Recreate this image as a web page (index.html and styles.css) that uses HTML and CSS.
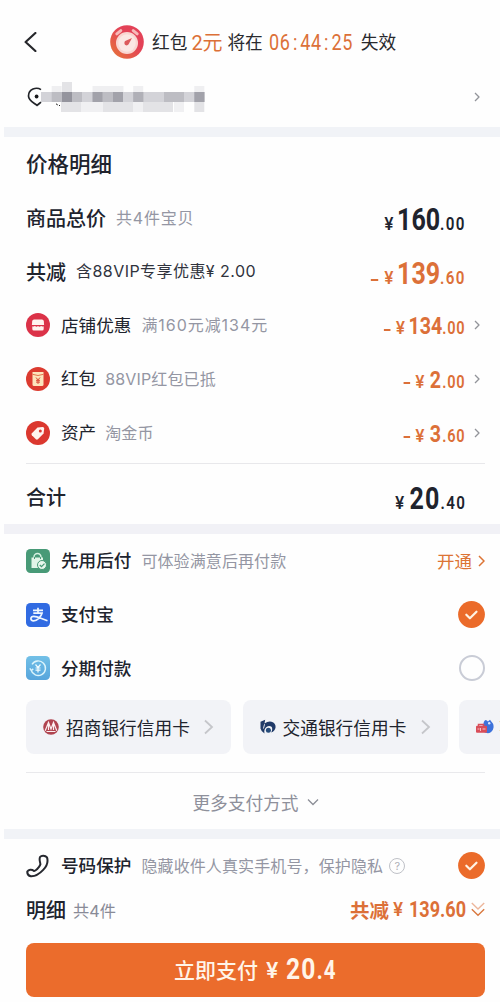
FILE: index.html
```html
<!DOCTYPE html>
<html lang="zh-CN">
<head>
<meta charset="utf-8">
<title>支付</title>
<link rel="stylesheet" href="styles.css">
</head>
<body>
<svg width="0" height="0" class="defs">
  <defs>
    <symbol id="next" viewBox="0 0 6 10"><path d="M1 1l4 4-4 4" fill="none" stroke="currentColor" stroke-width="1.3" stroke-linejoin="round"/></symbol>
    <symbol id="checked" viewBox="0 0 27 27"><circle cx="13.5" cy="13.5" r="13.4" fill="#eb6b2a"/><path d="M8.300 13.700l3.600 3.600 6.600-6.600" fill="none" stroke="#fff3e4" stroke-width="2.200" stroke-linecap="round" stroke-linejoin="round"/></symbol>
  </defs>
</svg>
<header class="top">
  <svg class="back" width="13" height="20" viewBox="0 0 13 20"><path d="M11.4 1L1.6 10l9.8 9" fill="none" stroke="#26272b" stroke-width="2.2" stroke-linecap="round" stroke-linejoin="round"/></svg>
  <svg class="clock" width="34" height="34" viewBox="0 0 34 34">
    <defs><linearGradient id="cg" x1="1" y1="0" x2="0" y2="1"><stop offset=".4" stop-color="#e34257"/><stop offset="1" stop-color="#e77838"/></linearGradient></defs>
    <circle cx="17" cy="17" r="16.8" fill="url(#cg)"/>
    <path d="M6.800 8.800l4-3.200M27.200 8.800l-4-3.200" stroke="#f7b9b8" stroke-width="3" stroke-linecap="round"/>
    <circle cx="17" cy="18" r="11" fill="#f9d6d1"/><circle cx="17" cy="18" r="8.700" fill="#fbe7e3"/>
    <path d="M16 20.3a2.5 2.5 0 0 1-.8-4.2l6.800-3.200-3.400 6.400a2.500 2.500 0 0 1-2.600 1z" fill="#dc5a5b"/>
  </svg>
  <div class="notice"><span>红包</span><span class="hot amount">2元</span><span>将在</span><span class="hot timer"><span class="narrow">06<i>:</i>44<i>:</i>25</span></span><span>失效</span></div>
</header>
<div class="address">
  <svg width="178" height="30" viewBox="0 0 178 30">
    <path d="M14 7.600C9.300 4.600 1.500 7 1.500 14c0 4.600 4.600 6.400 8.500 9.400 1.500-1.300 2.800-2.300 4-3.300" fill="none" stroke="#222429" stroke-width="1.700"/>
    <circle cx="9.600" cy="14.500" r="1.900" fill="#17181b"/>
    <path d="M29 21.800l1.800 1.200M32 23l1 1" stroke="#222" stroke-width="1"/>
    <path fill="#efeff1" d="M24.700 4h10v6h-10zM65.500 4h31v6h-31zM106.200 4h10v6h-10zM167.300 4h10v6h-10z"/>
    <path fill="#e3e3e6" d="M35 0h10v10H35zM34 20h20v10H34zM76 20h30v10H76zM116 20h30v10h-30zM167.300 20h10v10h-10z"/>
    <path fill="#f0f0f2" d="M54 20h22v10H54zM106 20h10v10h-10zM147 20h10v10h-10z"/>
    <path fill="#d3d3d8" d="M14 10h163.500v10H14z"/>
    <path fill="#bdbdc3" d="M24.700 10h10.300v10H24.700zM45 10h10v10H45zM76 10h10v10H76zM137 10h20v10h-20z"/>
    <path fill="#94949d" d="M35 10h10v10H35z"/>
    <path fill="#a2a2aa" d="M65.500 10h10.200v10H65.500zM86 10h10v10H86zM167.300 10h10.200v10h-10.200z"/>
    <path fill="#b0b0b7" d="M106.200 10h10.200v10h-10.200z"/>
  </svg>
  <svg class="next" width="6" height="10"><use href="#next"/></svg>
</div>
<div class="band"></div>

<section class="prices">
  <h2>价格明细</h2>
  <div class="row"><b class="label">商品总价</b><span class="hint h1">共4件宝贝</span><div class="price big"><i>¥</i>160<small>.00</small></div></div>
  <div class="row"><b class="label">共减</b><span class="hint dark h2">含88VIP专享优惠¥ 2.00</span><div class="price big hot"><em></em><i>¥</i>139<small>.60</small></div></div>
  <div class="row item">
    <svg width="24" height="24" viewBox="0 0 24 24"><circle cx="12" cy="12" r="12" fill="#db3248"/><path d="M8 6.500h8q1.500 0 1.800 1.500l.3 4h-12.200l.3-4Q6.500 6.500 8 6.500z" fill="#fff3ef"/><path d="M6.300 13.300q1.400.6 2.700-.2 1.500 1.200 3 0 1.500 1.200 3 0 1.300.8 2.700.2V16q0 1.500-1.500 1.500H7.800q-1.500 0-1.500-1.500z" fill="#fff3ef"/></svg>
    <span class="label">店铺优惠</span><span class="hint h3">满160元减134元</span><div class="price hot"><em></em><i>¥</i>134<small>.00</small></div><svg class="next" width="6" height="10"><use href="#next"/></svg></div>
  <div class="row item">
    <svg width="24" height="24" viewBox="0 0 24 24"><circle cx="12" cy="12" r="12" fill="#dc3b30"/><path d="M6.500 5h11v12.500q0 1.500-1.500 1.500H8q-1.500 0-1.500-1.500z" fill="#fce5bd"/><path d="M6.500 7.300q5.500 2.400 11 0" fill="none" stroke="#e0653f" stroke-width=".9"/><path d="M10 10.500l2 2.400 2-2.400M12 12.900v4M10 13.300h4M10 15.100h4" fill="none" stroke="#d94b36" stroke-width="1"/></svg>
    <span class="label">红包</span><span class="hint h4">88VIP红包已抵</span><div class="price hot"><em></em><i>¥</i><span class="wide">2</span><small>.00</small></div><svg class="next" width="6" height="10"><use href="#next"/></svg></div>
  <div class="row item">
    <svg width="24" height="24" viewBox="0 0 24 24"><circle cx="12" cy="12" r="12" fill="#db382f"/><path d="M11.500 6.500l5.200-.6q1.600 0 1.500 1.500l-.6 5.200-5.700 5.700q-1 .9-2 0l-4-4.100q-.9-1 0-2z" fill="#fff4ef"/><circle cx="14.300" cy="10" r="1.500" fill="#db382f"/></svg>
    <span class="label">资产</span><span class="hint h5">淘金币</span><div class="price hot"><em></em><i>¥</i><span class="wide">3</span><small>.60</small></div><svg class="next" width="6" height="10"><use href="#next"/></svg></div>
  <div class="row total"><b class="label">合计</b><div class="price big"><i>¥</i><span class="wide">20</span><small>.40</small></div></div>
</section>
<div class="band violet"></div>

<section class="methods">
  <div class="row item">
    <svg width="24" height="24" viewBox="0 0 24 24"><rect width="24" height="24" rx="4.500" fill="#489a77"/><path d="M8 9V8a3.500 3.500 0 0 1 7 0v1" fill="none" stroke="#d7f2e2" stroke-width="1.400"/><path d="M5.500 8.500h11.500v10.500H5.500z" fill="#e2f5e8"/><path d="M8.500 8v2M14.500 8v2" stroke="#489a77"/><circle cx="16" cy="16" r="4.500" fill="#e8f7ed" stroke="#489a77"/><path d="M13.800 16l1.700 1.600 3-3" fill="none" stroke="#489a77" stroke-width="1.300"/></svg>
    <b class="label">先用后付</b><span class="hint h6">可体验满意后再付款</span><span class="open">开通</span><svg class="open-arrow" width="7" height="12" viewBox="0 0 7 12"><path d="M1 1l5 5-5 5" fill="none" stroke="#dc7435" stroke-width="1.500"/></svg></div>
  <div class="row item">
    <svg width="24" height="24" viewBox="0 0 24 24"><rect width="24" height="24" rx="4.500" fill="#316be2"/><path d="M7 7.400h10M12 4.800v5M7.300 10.200h8.700c-1 3.500-4.700 7.600-8.500 7.600-3.700 0-3.300-4.500.3-4.500 3.700 0 7.300 2.300 13.700 4.400" fill="none" stroke="#eff7ff" stroke-width="1.700"/></svg>
    <b class="label">支付宝</b><svg class="mark" width="27" height="27"><use href="#checked"/></svg></div>
  <div class="row item">
    <svg width="24" height="24" viewBox="0 0 24 24"><defs><linearGradient id="sky" x2="0" y2="1"><stop stop-color="#72c0e7"/><stop offset="1" stop-color="#57a5dc"/></linearGradient></defs><rect width="24" height="24" rx="4.500" fill="url(#sky)"/><path d="M6 8.300a7.300 7.300 0 1 1-.9 5.700M3.800 12.300l1.500 2.200 2-1.600" fill="none" stroke="#dcf4fb" stroke-width="1.400"/><path d="M9.500 8.500l2.500 3 2.500-3M12 11.600V16.500M9.500 12h5M9.500 14.200h5" fill="none" stroke="#f0fcff" stroke-width="1.200"/></svg>
    <b class="label">分期付款</b><span class="mark radio"></span></div>
  <div class="banks">
    <div class="bank">
      <svg width="16" height="16" viewBox="0 0 16 16"><circle cx="8" cy="8" r="7.800" fill="#b04450"/><path d="M2.200 11.800L5.500 3.500 8 10l2.500-6.500 3.300 8.300M5.500 4v7M10.500 4v7M3.500 12.500h9" fill="none" stroke="#fbeef0" stroke-width="1.200"/></svg>
      <span>招商银行信用卡</span><svg class="more" width="10" height="16" viewBox="0 0 10 16"><path d="M1 1.500L8 8l-7 6.500" fill="none" stroke="#c5c6ca" stroke-width="1.800"/></svg></div>
    <div class="bank">
      <svg width="16" height="16" viewBox="0 0 16 16"><path d="M.5 2.800L5.200.8 4.500 4.600Q8 2 11.500 2.800q4.200 1.400 4.100 5.400-.6 4-4.400 5.300 1.900-3.700.3-5.700-2.300-2-5.300.4-2.600 2.600-1.700 6.200Q1.300 13 .5 9.500z" fill="#203a68"/><path d="M4.600 5.200L3.400 9.600" stroke="#f2f3f7" stroke-width=".9"/><circle cx="8.400" cy="11.300" r="2.500" fill="#264b7b"/></svg>
      <span>交通银行信用卡</span><svg class="more" width="10" height="16" viewBox="0 0 10 16"><path d="M1 1.500L8 8l-7 6.500" fill="none" stroke="#c5c6ca" stroke-width="1.800"/></svg></div>
    <div class="bank">
      <svg width="18" height="16" viewBox="0 0 18 16"><path d="M7.500 4.500Q8 1 10 1l2 1.500L14 .8l1.500 2q2.500 2 2 6-1 5-5.500 5.400-5-.2-6-5z" fill="#3d72db"/><circle cx="13.200" cy="4.200" r="1.200" fill="#dce8ff"/><path d="M2.500 7V5.500h5V7" fill="none" stroke="#d94d59" stroke-width="1.500"/><rect y="6.700" width="11" height="7" rx="1" fill="#d94d59"/><path d="M1.500 10h2M4.500 9v3M6.500 10h3" stroke="#f5c2c6"/></svg>
      <span class="peek">花呗</span></div>
  </div>
  <div class="expand"><span>更多支付方式</span><svg width="12" height="8" viewBox="0 0 12 8"><path d="M1 1.500l5 5 5-5" fill="none" stroke="#8c8e97" stroke-width="1.300"/></svg></div>
</section>
<div class="band"></div>

<footer>
  <div class="row item protect">
    <svg width="24" height="24" viewBox="0 0 24 24"><path d="M14 3c1.400-1.900 5.200-1.800 7 .4 1.300 4-.3 8.800-3.800 12.500-3.600 3.800-8 6.700-12.400 6.400-2.500-.6-3.700-2.400-3.500-4.800 1.300-2 4.400-2.600 6.400-.7 1.600.8 5.600-3.300 6.700-6.400C14.200 7.600 12.900 6 14 3z" fill="none" stroke="#26282f" stroke-width="2" stroke-linejoin="round"/></svg>
    <b class="label">号码保护</b><span class="hint h7">隐藏收件人真实手机号，保护隐私</span><span class="help">?</span><svg class="mark" width="27" height="27"><use href="#checked"/></svg></div>
  <div class="summary"><b>明细</b><span class="count">共4件</span><div class="saved hot"><b>共减</b><span class="yen">¥</span><span class="num"><span class="narrow">139.60</span></span></div>
    <svg width="14" height="15" viewBox="0 0 14 15" fill="none" stroke-width="1.400"><path d="M.8 1L7 7l6.200-6" stroke="#edb69b"/><path d="M.8 7.300L7 13.300l6.200-6" stroke="#d9783f"/></svg></div>
  <div class="pay"><span>立即支付</span><span class="pay-yen">¥</span><span class="pay-num"><span class="narrow">20<small>.4</small></span></span></div>
</footer>
</body>
</html>
```
FILE: styles.css
```css
* { box-sizing: border-box; }
body {
  margin: 0; width: 500px; height: 1002px; overflow: hidden;
  background: #fefefe; color: #20232d;
  font-family: Inter, "Noto Sans CJK SC", sans-serif;
}
svg { display: block; flex: none; }
.defs { position: absolute; }
span, b, h2 { white-space: nowrap; }
i, em { font-style: normal; }
.hot { color: #dc7038; }
.narrow { display: inline-block; transform: scaleX(.82); transform-origin: left center; }

.top { height: 84px; display: flex; align-items: center; padding-left: 24px; }
.clock { margin-left: 73px; }
.notice { display: flex; align-items: center; margin-left: 8px; padding-top: 1px; font-size: 17.7px; line-height: 30px; color: #292a2e; }
.amount { margin: 0 5px 0 4px; font-size: 20px; width: 31px; letter-spacing: -.2px; font-family: Roboto, "Noto Sans CJK SC", sans-serif; }
.timer { width: 84px; margin: 0 8px 0 6px; font: 22px/30px Roboto, sans-serif; }
.timer .narrow { letter-spacing: .8px; }
.timer i { margin: 0 2.800px; }
.address { height: 43px; padding: 0 20px 17px 27px; display: flex; align-items: center; justify-content: space-between; }
.next { color: #92949a; }
.band { height: 10px; margin-left: 4px; background: #f1f3f7; }
.violet { background: #f1f1f6; }

.prices { height: 387px; padding: 0 20px 0 26px; }
h2 { margin: 0; font-size: 21.5px; font-weight: 500; line-height: 54px; }
.row { height: 53.7px; display: flex; align-items: center; }
.row > .label { font-size: 20px; font-weight: 500; padding-bottom: 1px; }
.item > .label { margin-left: 11px; font-size: 17.6px; font-weight: 400; padding-bottom: 2px; }
.item > b.label { font-weight: 500; }
.hint { margin-left: 10px; padding-bottom: 2px; font-size: 16px; color: #9496a3; }
.dark { color: #30333d; padding-bottom: 3px; }
.h1 { letter-spacing: .8px; }
.h2 { letter-spacing: .45px; }
.h3 { letter-spacing: .95px; }
.h4, .h5 { margin-left: 9px; letter-spacing: .15px; }
.h6 { letter-spacing: .1px; }
.h7 { letter-spacing: .12px; }
.price {
  margin-left: auto; padding-top: 4px; display: flex; align-items: baseline;
  font: 700 24px/30px Roboto, sans-serif; transform: scaleX(.82); transform-origin: right center;
}
.prices .next { margin-left: 9px; }
.price i { display: inline-block; width: 14px; margin-right: 3px; text-align: center; font: 600 17.5px/20px Inter, sans-serif; transform: scaleX(1.15); }
.price em { width: 8px; height: 2px; align-self: center; margin: 5px 5px 0 0; background: currentColor; }
.price small { font-size: 17.8px; letter-spacing: .9px; font-weight: 600; }
.price .wide { margin-left: 2px; letter-spacing: 1.500px; }
.price.big { padding-top: 8px; font-size: 30.5px; margin-right: 14px; }
.price.big small { font-size: 18.5px; letter-spacing: 1.6px; }
.price.big em { width: 9px; height: 2.500px; margin: 9px 6px 0 0; }
.total { height: 60px; margin: 4px -5px 0 0; padding: 5px 5px 0 0; border-top: 1px solid #e8e8eb; }
.total .price.big { padding-top: 9px; }
.total > .label { padding-bottom: 0; }

.methods { height: 295px; padding: 0 15px 0 26px; }
.open { margin-left: auto; padding-bottom: 1px; font-size: 17.5px; color: #dc7435; }
.open-arrow { margin-left: 6px; }
.mark { margin-left: auto; }
.radio { width: 26px; height: 26px; border: 2px solid #c9ccd6; border-radius: 50%; }
.banks { display: flex; gap: 11.5px; margin: 5px -15px 0 0; overflow: hidden; }
.bank { flex: none; width: 205px; height: 53.5px; padding: 0 17px; display: flex; align-items: center; background: #f2f3f7; border-radius: 8px; font-size: 17.7px; }
.bank span { margin-left: 7px; }
.bank .peek { margin-left: 5px; }
.more { margin-left: auto; }
.expand { margin-top: 18.5px; border-top: 1px solid #e9e9ec; height: 58px; display: flex; align-items: center; justify-content: center; gap: 8px; font-size: 17.7px; color: #8e909b; }

footer { padding: 0 15px 0 26px; }
.help { margin-left: 6px; width: 16px; height: 16px; border: 1px solid #bfc1c7; border-radius: 50%; color: #aeb0b8; font-size: 11px; line-height: 14px; text-align: center; }
.summary { height: 34px; display: flex; align-items: center; font-size: 20px; }
.summary b { font-weight: 500; }
.summary .saved b { font-size: 19.5px; font-weight: 700; }
.count { margin-left: 7px; font-size: 16.2px; color: #898b97; }
.saved { margin-left: auto; display: flex; align-items: center; }
.yen { margin-left: 4px; width: 16px; font: 600 18px/30px Inter, sans-serif; }
.num { width: 62px; font: 700 22px/30px Roboto, sans-serif; }
.pay { margin-top: 16px; height: 54px; border-radius: 8px; background: #eb6c2c; color: #fff5e9; display: flex; align-items: center; justify-content: center; font-size: 21px; font-weight: 500; }
.pay > span:first-child { padding-bottom: 2px; }
.pay-yen { margin-left: 8px; width: 20px; font: 600 22px/30px Inter, sans-serif; }
.pay-num { width: 51px; font: 700 30px/34px Roboto, sans-serif; }
.pay-num .narrow { letter-spacing: 1.500px; }
.pay-num small { font-size: 25px; }
```
